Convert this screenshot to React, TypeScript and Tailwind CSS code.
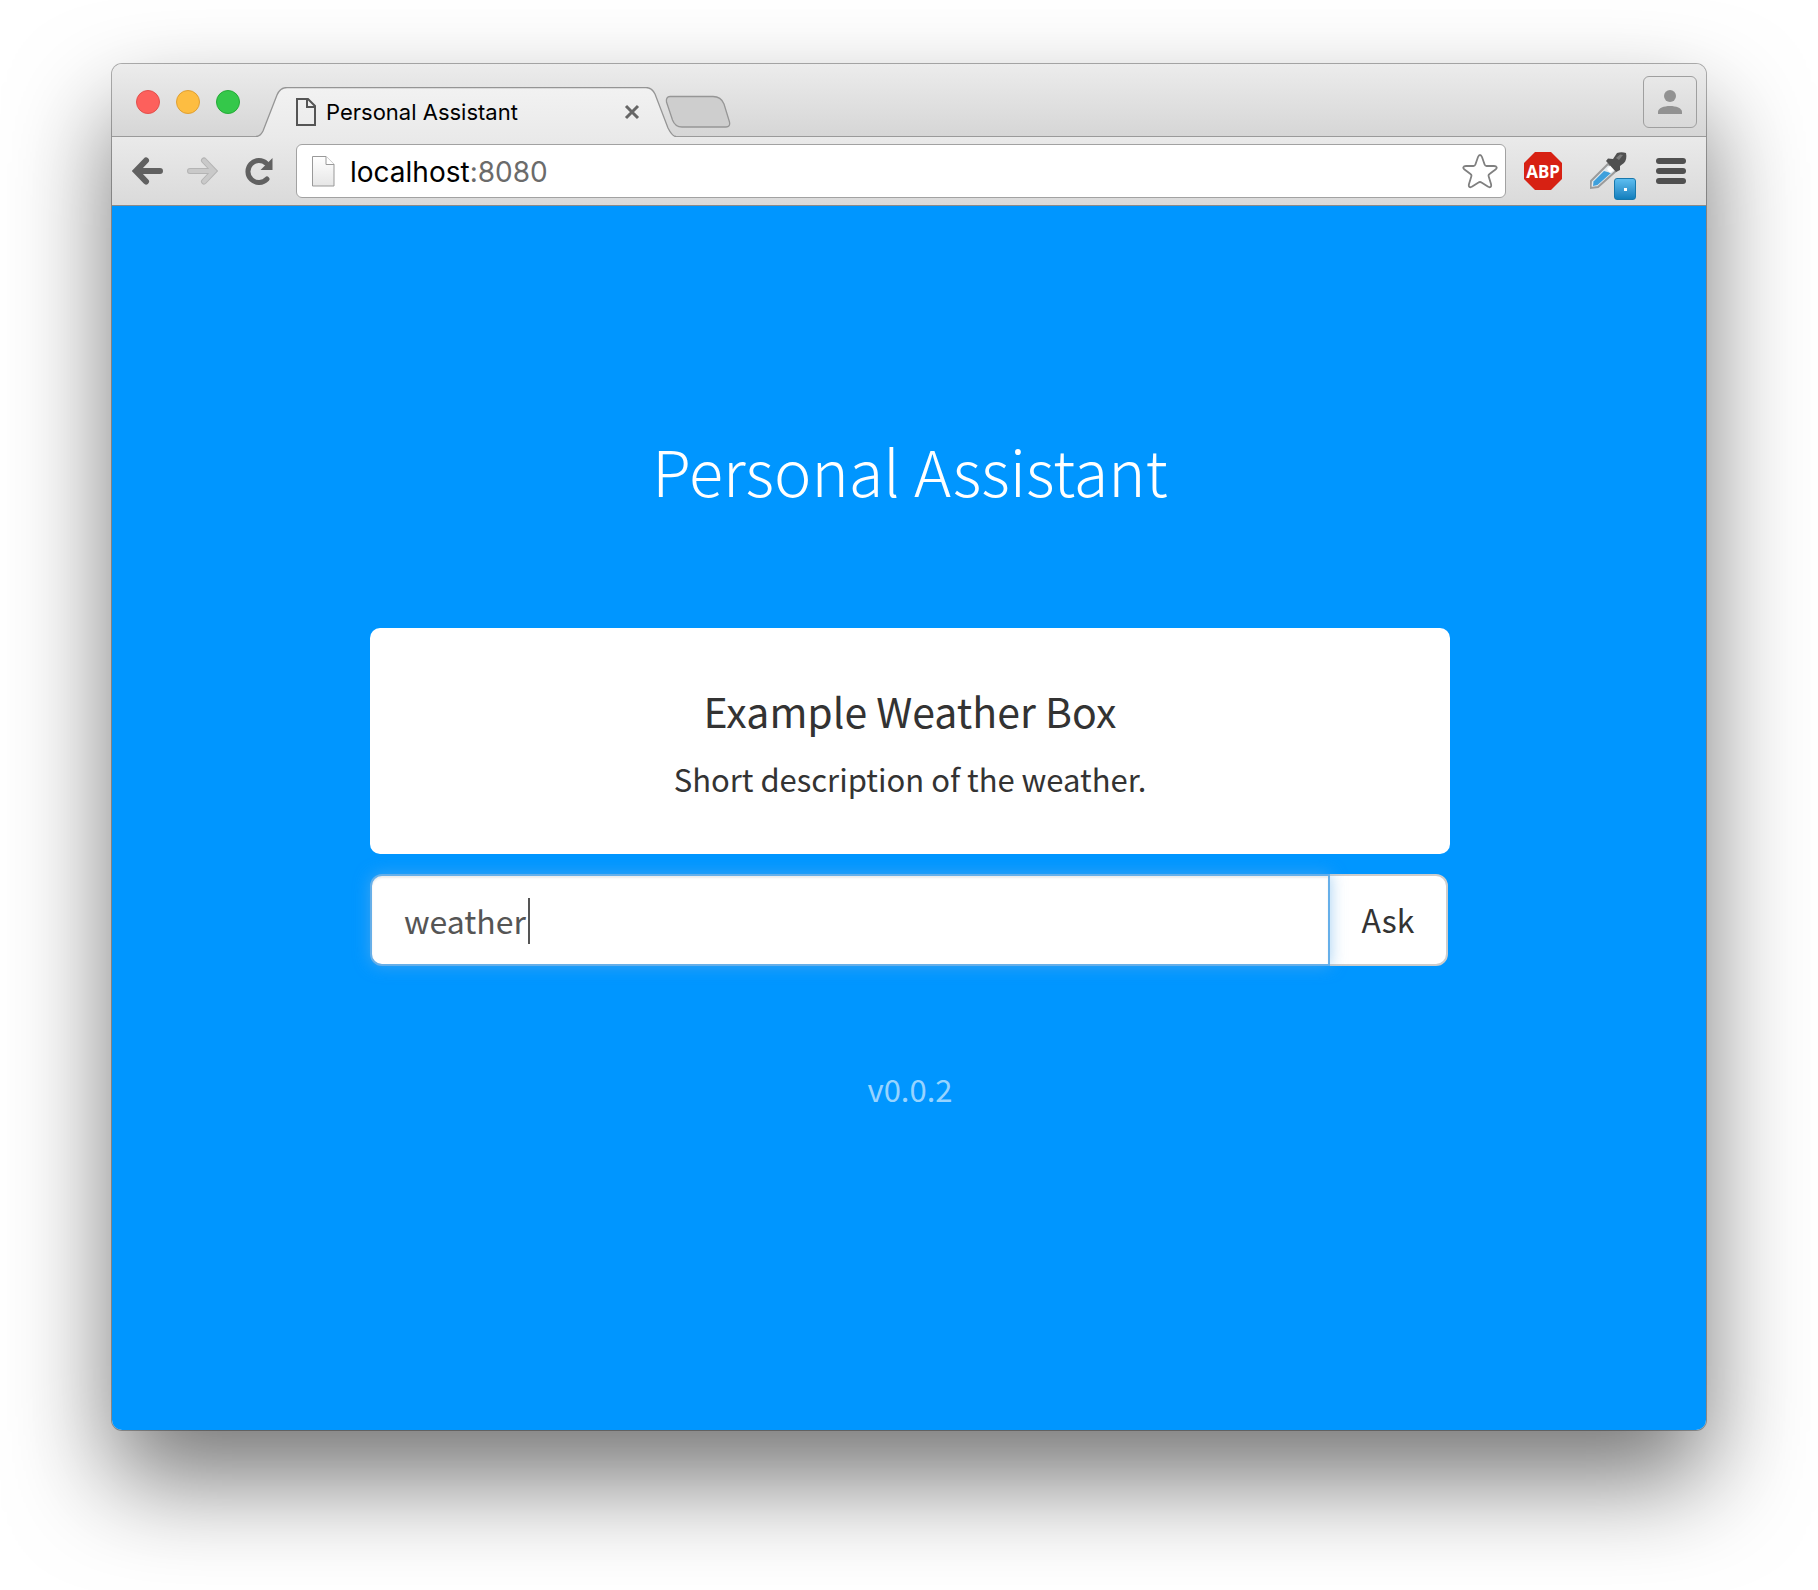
import { useState } from "react";

function TrafficLight({ label, className }: { label: string; className: string }) {
  return <button type="button" aria-label={label} className={`size-6 rounded-full border ${className}`} />;
}

function Tab() {
  return (
    <div className="relative flex h-[50px] w-[420px] items-center pl-10 pr-[34px]">
      <svg className="absolute inset-0" width="420" height="50" viewBox="0 0 420 50" fill="none" aria-hidden="true">
        <defs>
          <linearGradient id="tabFill" x1="0" y1="0" x2="0" y2="1">
            <stop offset="0" stopColor="#f2f2f2" />
            <stop offset="1" stopColor="#eaeaea" />
          </linearGradient>
        </defs>
        <path d="M0 50V49.500C3 49.500 5 48 7 44L21 8C23 3 26 .5 31 .5H390C395 .5 397 3 399 7L412 41C415 47 417 49.500 420 49.500V50Z" fill="url(#tabFill)" />
        <path d="M0 49.500C3 49.500 5 48 7 44L21 8C23 3 26 .5 31 .5H390C395 .5 397 3 399 7L412 41C415 47 417 49.500 420 49.500" stroke="#959595" strokeWidth="1.300" />
      </svg>
      <svg className="relative shrink-0" width="20" height="28" viewBox="0 0 20 28" fill="none" aria-hidden="true">
        <path d="M1 1H12L19 8V27H1Z" stroke="#555" strokeWidth="2" />
        <path d="M11 1V9H19" stroke="#555" strokeWidth="2" />
      </svg>
      <span className="relative ml-[10px] flex-1 truncate text-[22px] leading-7 text-black">Personal Assistant</span>
      <button type="button" aria-label="Close tab" className="relative flex size-5 items-center justify-center">
        <svg width="16" height="16" viewBox="0 0 16 16" fill="none" aria-hidden="true">
          <path d="M2 2L14 14M14 2L2 14" stroke="#666" strokeWidth="3" />
        </svg>
      </button>
    </div>
  );
}

function TitleBar() {
  return (
    <header className="flex h-[73px] border-b border-[#9a9a9a] bg-linear-to-b from-[#ececec] to-[#d6d6d6]">
      <div className="flex items-center gap-4 pl-6 pt-1">
        <TrafficLight label="Close" className="border-[#e2504c] bg-[#fd605c]" />
        <TrafficLight label="Minimize" className="border-[#e0a033] bg-[#fdbd41]" />
        <TrafficLight label="Zoom" className="border-[#25ab37] bg-[#34c84a]" />
      </div>
      <div className="-mb-px ml-4 flex flex-1 items-end">
        <Tab />
        <button type="button" aria-label="New tab" className="-ml-[11px] mb-2 self-end">
          <svg width="66" height="34" viewBox="0 0 66 34" fill="none" aria-hidden="true">
            <path d="M5 1.500H48C54 1.500 57 4 59 9L64.500 27C65.300 30 64 32 61 32H17C12 32 9 29 7.500 25L1.500 7C1 4 2 1.500 5 1.500Z" fill="#cecece" stroke="#969696" strokeWidth="1.300" />
          </svg>
        </button>
      </div>
      <button type="button" aria-label="Profile" className="mr-[9px] mt-3 flex h-[52px] w-[54px] items-center justify-center rounded-md border border-[#9f9f9f]">
        <svg width="24" height="24" viewBox="0 0 24 24" fill="#929292" aria-hidden="true">
          <circle cx="12" cy="6" r="6" />
          <path d="M0 24V22C0 18 6 16 12 16S24 18 24 22V24Z" />
        </svg>
      </button>
    </header>
  );
}

const starPath = "M18 2C19 2 19.500 2.800 20 4L22.600 11.500C23 12.600 23.500 13 24.600 13H32C35 13 35.500 15 33.500 16.500L27.500 21C26.500 21.700 26.300 22.400 26.700 23.500L29 31C29.800 34 28 35 25.800 33.600L19.500 29.500C18.500 28.800 17.500 28.800 16.500 29.500L10.200 33.600C8 35 6.200 34 7 31L9.300 23.500C9.700 22.400 9.500 21.700 8.500 21L2.500 16.500C.5 15 1 13 4 13H11.400C12.500 13 13 12.600 13.400 11.500L16 4C16.500 2.800 17 2 18 2Z";

function ToolBar() {
  return (
    <nav aria-label="Browser toolbar" className="flex h-[69px] items-center border-b border-[#8a8a8a] bg-linear-to-b from-[#eaeaea] to-[#dadada]">
      <button type="button" aria-label="Back" className="ml-5">
        <svg width="32" height="28" viewBox="0 0 32 28" fill="none" stroke="#616161" strokeWidth="6" strokeLinecap="round" aria-hidden="true">
          <path d="M14 3.500L4 14L14 24.500M5 14H28" />
        </svg>
      </button>
      <button type="button" aria-label="Forward" disabled className="ml-[22px]">
        <svg width="32" height="28" viewBox="0 0 32 28" fill="none" strokeLinecap="round" aria-hidden="true">
          <path d="M18 3.500L28 14L18 24.500M27 14H4" stroke="#b4b4b4" strokeWidth="6" />
          <path d="M18 3.500L28 14L18 24.500M27 14H4" stroke="#c9c9c9" strokeWidth="4" />
        </svg>
      </button>
      <button type="button" aria-label="Reload" className="ml-[27px]">
        <svg width="28" height="28" viewBox="0 0 28 28" fill="none" aria-hidden="true">
          <path d="M22 22A11 11 0 1 1 21.500 6.500" stroke="#616161" strokeWidth="5" strokeLinecap="round" />
          <path d="M27.500 1V13H15.500Z" fill="#616161" />
        </svg>
      </button>
      <div className="ml-[23px] flex h-[54px] flex-1 items-center rounded-md border border-[#a2a2a2] bg-white pl-[15px] pr-[7px]">
        <svg width="23" height="31" viewBox="0 0 23 31" fill="none" aria-hidden="true">
          <defs>
            <linearGradient id="docFill" x1="0" y1="0" x2="0" y2="1">
              <stop offset="0" stopColor="#fff" />
              <stop offset="1" stopColor="#e6e6e6" />
            </linearGradient>
          </defs>
          <path d="M.5.5H14L22 8.500V30H.5Z" fill="url(#docFill)" stroke="#999" />
          <path d="M14 .5V8.500H22" fill="#fff" stroke="#999" />
        </svg>
        <a href="#home" className="ml-[15px] flex-1 pt-px text-[28px] leading-9 text-black">
          localhost<span className="text-[#6b6b6b]">:8080</span>
        </a>
        <button type="button" aria-label="Bookmark this page">
          <svg width="36" height="36" viewBox="0 0 36 36" fill="none" aria-hidden="true">
            <path d={starPath} stroke="#808080" strokeWidth="1.800" />
          </svg>
        </button>
      </div>
      <button type="button" aria-label="Adblock Plus" className="ml-[18px]">
        <svg width="38" height="38" viewBox="0 0 38 38" aria-hidden="true">
          <path d="M11 0H27L38 11V27L27 38H11L0 27V11Z" fill="#d72113" />
          <text x="19" y="26" textAnchor="middle" fontSize="17" fontWeight="700" fill="#fff" fontFamily="Noto Sans">ABP</text>
        </svg>
      </button>
      <button type="button" aria-label="Color picker" className="relative ml-7 h-10 w-[46px]">
        <svg width="38" height="38" viewBox="0 0 38 38" fill="none" aria-hidden="true">
          <path d="M18 12L1 29L.5 36L8 35L27 18Z" fill="#e4eaee" stroke="#9b9b9b" strokeWidth="2" />
          <path d="M14 19L3.500 29.500L3 34L7.500 33L21 21Z" fill="#3fa0dc" />
          <path d="M21 13L25 17L20 21L17 17Z" fill="#fff" />
          <path d="M16 9L18 6.500L23 7L27 1C30 0 33 0 36 1C37 5 36 9 34 11L30 14L30 18L26 20Z" fill="#505050" />
          <path d="M26 6L30 2.500L33 3L29 8Z" fill="#7c7c7c" />
        </svg>
        <span className="absolute bottom-[-9px] right-0 flex size-[22px] items-center justify-center rounded-[3px] border border-[#1878ac] bg-linear-to-b from-[#5cbdf0] to-[#0f7fbd]">
          <span className="size-[3px] bg-white" />
        </span>
      </button>
      <button type="button" aria-label="Menu" className="ml-5 mr-5 flex flex-col gap-1">
        <span className="h-[6px] w-[30px] rounded-full bg-[#505050]" />
        <span className="h-[6px] w-[30px] rounded-full bg-[#505050]" />
        <span className="h-[6px] w-[30px] rounded-full bg-[#505050]" />
      </button>
    </nav>
  );
}

function AssistantPage() {
  const [query, setQuery] = useState("weather");
  return (
    <main className="bg-[#0096ff] pb-[321px] pl-[26px] pr-6 pt-[228px] text-center font-['Noto_Sans_CJK_JP',sans-serif] text-[#333]">
      <h1 className="text-[63px] font-light leading-[72px] text-white">Personal Assistant</h1>
      <div className="mx-auto mt-[122px] max-w-[1080px]">
        <section className="rounded-[10px] bg-white px-8 pb-[55px] pt-[58px]">
          <h2 className="text-[41px] leading-[48px]">Example Weather Box</h2>
          <p className="mt-[25px] text-[31px] leading-10">Short description of the weather.</p>
        </section>
        <form className="mr-[2px] mt-5 flex h-[92px]" onSubmit={(e) => e.preventDefault()}>
          <div className="relative z-10 flex-1">
            <input
              type="text"
              aria-label="Question"
              value={query}
              onChange={(e) => setQuery(e.target.value)}
              className="size-full rounded-l-xl border-2 border-[#66afe9] bg-white px-8 text-[32px] text-[#555] caret-transparent shadow-[inset_0_2px_2px_rgba(0,0,0,0.075),0_0_16px_rgba(102,175,233,0.6)] outline-none"
            />
            <span className="absolute left-[158px] top-6 h-[46px] w-[2px] bg-[#555]" />
          </div>
          <button type="submit" className="-ml-[2px] w-[120px] rounded-r-xl border-2 border-[#ccc] bg-white pb-[2px] text-[32px]">
            Ask
          </button>
        </form>
      </div>
      <p className="mt-[103px] text-[31px] leading-10 text-white/60">v0.0.2</p>
    </main>
  );
}

export default function App() {
  return (
    <div className="min-h-screen bg-white px-28 pb-40 pt-16 font-[Inter,sans-serif]">
      <div className="overflow-hidden rounded-[10px] shadow-[0_0_0_1px_rgba(0,0,0,0.3),0_50px_100px_rgba(0,0,0,0.54)]">
        <TitleBar />
        <ToolBar />
        <AssistantPage />
      </div>
    </div>
  );
}
